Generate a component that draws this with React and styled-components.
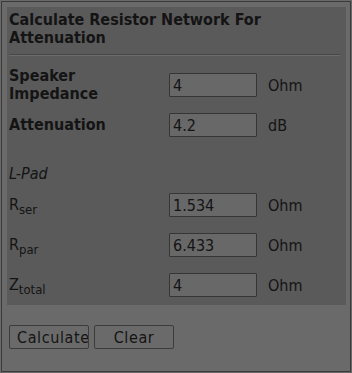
import React from 'react'
import styled, { createGlobalStyle } from 'styled-components';

const GlobalStyle = createGlobalStyle`
  body {
    margin: 0;
    background: #6a6a6a;
    font-family: "DejaVu Sans Condensed", "DejaVu Sans", sans-serif;
    font-stretch: condensed;
    color: #141414;
  }
`;

function Field(props) {
  return (
    <Row>
      <Label bold={props.bold}>{props.label}</Label>
      <Input defaultValue={props.value} />
      <Unit>{props.unit}</Unit>
    </Row>
  )
}

function App() {
  return (
    <Frame>
      <GlobalStyle />
      <Panel>
        <Title>Calculate Resistor Network For Attenuation</Title>
        <Rule />
        <Field bold label={<>Speaker<br />Impedance</>} value="4" unit="Ohm" />
        <Field bold label="Attenuation" value="4.2" unit="dB" />
        <Section>L-Pad</Section>
        <Field label={<>R<sub>ser</sub></>} value="1.534" unit="Ohm" />
        <Field label={<>R<sub>par</sub></>} value="6.433" unit="Ohm" />
        <Field label={<>Z<sub>total</sub></>} value="4" unit="Ohm" />
      </Panel>
      <Buttons>
        <Button>Calculate</Button>
        <Button center>Clear</Button>
      </Buttons>
    </Frame>
  )
}
export default App

const Frame = styled.div`
  margin: 1px;
  width: 343px;
  height: 364px;
  padding: 5px 0 0 5px;
  border: 1px solid #3a3a3a;
  background: #6a6a6a;
`;

const Panel = styled.div`
  width: 335px;
  padding: 4px 2px 0 2px;
  background: #5a5a5a;
`;

const Title = styled.h3`
  margin: 0;
  font-size: 16px;
  line-height: 18px;
  font-weight: bold;
`;

const Rule = styled.hr`
  margin: 7px 4px 9px 0;
  border: none;
  border-top: 1px solid #474747;
  border-bottom: 1px solid #6c6c6c;
`;

const Row = styled.div`
  display: grid;
  grid-template-columns: 160px 88px auto;
  align-items: center;
  height: 40px;
`;

const Label = styled.div`
  font-size: 16px;
  line-height: 18px;
  font-weight: ${p => (p.bold ? 'bold' : 'normal')};

  sub {
    font-size: 13px;
    vertical-align: -4px;
    line-height: 0;
  }
`;

const Input = styled.input`
  box-sizing: border-box;
  width: 88px;
  height: 24px;
  padding: 0 3px;
  border: 1px solid #363636;
  border-radius: 1px;
  background: #686868;
  font-family: inherit;
  font-stretch: condensed;
  font-size: 16px;
  color: #141414;
  outline: none;
`;

const Unit = styled.span`
  margin-left: 11px;
  font-size: 16px;
`;

const Section = styled.div`
  display: flex;
  align-items: flex-end;
  height: 38px;
  padding-bottom: 2px;
  font-size: 16px;
  font-style: italic;
`;

const Buttons = styled.div`
  display: flex;
  gap: 5px;
  margin: 20px 0 0 2px;
`;

const Button = styled.button`
  box-sizing: border-box;
  width: 80px;
  height: 24px;
  padding: 0 0 0 7px;
  overflow: hidden;
  white-space: nowrap;
  text-align: ${p => (p.center ? 'center' : 'left')};
  padding-right: ${p => (p.center ? '7px' : '0')};
  border: 1px solid #3c3c3c;
  border-radius: 2px;
  background: #6a6a6a;
  font-family: inherit;
  font-stretch: condensed;
  font-size: 16px;
  letter-spacing: 0.6px;
  color: #141414;
`;
